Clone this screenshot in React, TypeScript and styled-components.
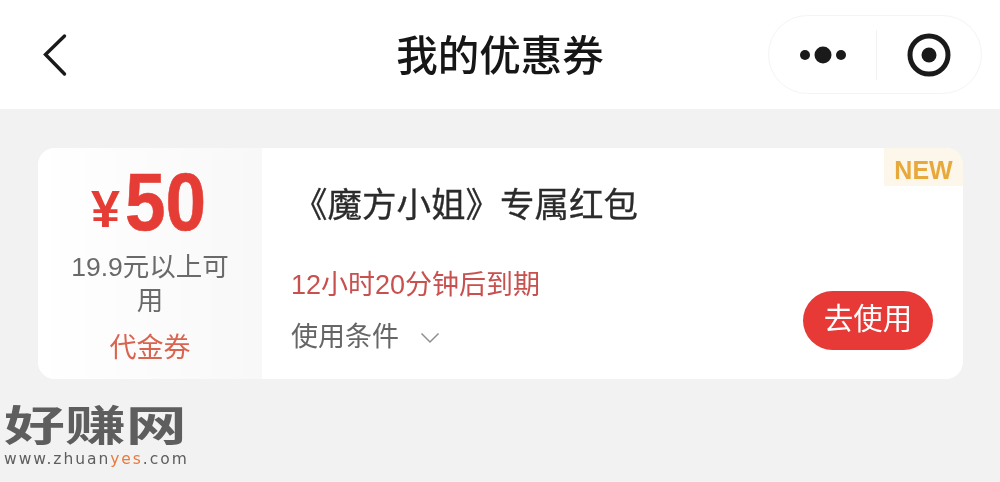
import React from "react";
import styled, { createGlobalStyle } from "styled-components";

const Global = createGlobalStyle`
  html, body { margin: 0; padding: 0; background: #f2f2f2; }
  body { font-family: "Liberation Sans", "Noto Sans CJK SC", sans-serif; }
`;

const Page = styled.div`
  width: 1000px;
  height: 482px;
  overflow: hidden;
  background: #f2f2f2;
  display: flex;
  flex-direction: column;
  filter: blur(0.35px);
`;

const Header = styled.header`
  height: 109px;
  flex: none;
  background: #fff;
  display: grid;
  grid-template-columns: 1fr auto 1fr;
  align-items: center;
  padding: 0 18px;
`;

const BackButton = styled.div`
  display: flex;
  align-items: center;
  height: 46px;
  padding-left: 24px;
`;

const Title = styled.h1`
  margin: 0 0 4px;
  font-size: 41.5px;
  line-height: 54px;
  font-weight: 500;
  font-family: "Noto Sans CJK SC", sans-serif;
  color: #161616;
`;

const Capsule = styled.div`
  justify-self: end;
  width: 214px;
  height: 79px;
  box-sizing: border-box;
  border: 1.5px solid #f4f4f4;
  border-radius: 40px;
  display: grid;
  grid-template-columns: 107px 1px 1fr;
  align-items: center;
  justify-items: center;
`;

const Divider = styled.div`
  width: 1px;
  height: 50px;
  background: #f2f2f2;
`;

const Card = styled.section`
  margin: 39px 37px 0 38px;
  height: 231px;
  flex: none;
  border-radius: 17px;
  background: #fff;
  display: flex;
  overflow: hidden;
  position: relative;
`;

const Amount = styled.div`
  width: 224px;
  flex: none;
  box-sizing: border-box;
  padding: 16px 22px 0;
  background: linear-gradient(90deg, #ffffff 0%, #f8f8f8 100%);
  display: flex;
  flex-direction: column;
  align-items: center;
  text-align: center;
`;

const Price = styled.div`
  display: flex;
  align-items: baseline;
  height: 76px;
  color: #e53d35;
  font-weight: 700;
  line-height: 76px;
  margin-left: -2px;
`;

const Yen = styled.span`
  font-size: 52px;
  display: inline-block;
  margin-right: 5px;
  transform: translateY(-3px);
`;

const Digits = styled.span`
  font-size: 81px;
  display: inline-block;
  width: 82px;
  transform: scaleX(0.9);
  transform-origin: left center;
  -webkit-text-stroke: 0.6px #e53d35;
`;

const Condition = styled.div`
  margin-top: 10px;
  font-size: 26.5px;
  line-height: 34px;
  color: #6a6a6a;
  width: 170px;
`;

const Kind = styled.div`
  margin-top: 9px;
  font-size: 27px;
  line-height: 38px;
  color: #d9644f;
  font-family: "Noto Sans CJK SC", sans-serif;
`;

const Info = styled.div`
  flex: 1;
  display: flex;
  flex-direction: column;
  padding: 29px 30px 0 31px;
`;

const CouponName = styled.div`
  font-size: 34.5px;
  line-height: 50px;
  color: #2b2b2b;
  font-family: "Noto Sans CJK SC", sans-serif;
  -webkit-text-stroke: 0.3px #2b2b2b;
`;

const Bottom = styled.div`
  margin-top: 40px;
  margin-left: -2px;
  display: flex;
  justify-content: space-between;
  align-items: flex-end;
`;

const Meta = styled.div`
  display: flex;
  flex-direction: column;
  gap: 15px;
`;

const Expiry = styled.div`
  font-size: 27px;
  line-height: 37px;
  color: #c8504f;
`;

const Terms = styled.div`
  display: flex;
  align-items: center;
  gap: 21px;
  font-size: 27px;
  line-height: 37px;
  color: #666;
`;

const UseButton = styled.div`
  width: 130px;
  height: 59px;
  border-radius: 30px;
  background: #e73a36;
  color: #fff;
  font-size: 29.5px;
  line-height: 56px;
  text-align: center;
  margin-bottom: 6px;
`;

const NewBadge = styled.div`
  position: absolute;
  top: 0;
  right: 0;
  width: 79px;
  height: 38px;
  background: #fdf6ea;
  color: #e8a93c;
  font-weight: 700;
  font-size: 25px;
  line-height: 44px;
  text-align: center;
`;

const Watermark = styled.div`
  margin: 24px 0 0 4px;
  width: 190px;
  display: flex;
  flex-direction: column;
  gap: 0;
`;

const MarkTitle = styled.div`
  height: 48px;
  font-weight: 700;
  font-size: 42px;
  line-height: 48px;
  color: #5e5e5e;
  white-space: nowrap;
  transform: scaleX(1.45);
  transform-origin: left center;
`;

const MarkUrl = styled.div`
  font-family: "DejaVu Sans", sans-serif;
  font-size: 15.5px;
  line-height: 16px;
  letter-spacing: 1.95px;
  color: #5e5e5e;
  white-space: nowrap;
`;

const MarkAccent = styled.span`
  color: #e87a3e;
`;

export default function App() {
  return (
    <Page>
      <Global />
      <Header>
        <BackButton>
          <svg width="26" height="44" viewBox="0 0 26 44" fill="none">
            <path d="M22.5 3 L3.5 21.5 L22.5 41" stroke="#1a1a1a" strokeWidth="3.4" strokeLinecap="round" strokeLinejoin="miter" />
          </svg>
        </BackButton>
        <Title>我的优惠券</Title>
        <Capsule>
          <svg width="48" height="18" viewBox="0 0 48 18">
            <circle cx="6" cy="9" r="5" fill="#1a1a1a" />
            <circle cx="24" cy="9" r="8.5" fill="#1a1a1a" />
            <circle cx="42" cy="9" r="5" fill="#1a1a1a" />
          </svg>
          <Divider />
          <svg width="44" height="44" viewBox="0 0 44 44">
            <circle cx="22" cy="22" r="19" fill="none" stroke="#1a1a1a" strokeWidth="5" />
            <circle cx="22" cy="22" r="7.5" fill="#1a1a1a" />
          </svg>
        </Capsule>
      </Header>
      <Card>
        <Amount>
          <Price>
            <Yen>¥</Yen>
            <Digits>50</Digits>
          </Price>
          <Condition>19.9元以上可用</Condition>
          <Kind>代金券</Kind>
        </Amount>
        <Info>
          <CouponName>《魔方小姐》专属红包</CouponName>
          <Bottom>
            <Meta>
              <Expiry>12小时20分钟后到期</Expiry>
              <Terms>
                使用条件
                <svg width="20" height="14" viewBox="0 0 20 14" fill="none">
                  <path d="M1.5 2.5 L10 11 L18.5 2.5" stroke="#8f8f8f" strokeWidth="1.5" />
                </svg>
              </Terms>
            </Meta>
            <UseButton>去使用</UseButton>
          </Bottom>
        </Info>
        <NewBadge>NEW</NewBadge>
      </Card>
      <Watermark>
        <MarkTitle>好赚网</MarkTitle>
        <MarkUrl>
          www.zhuan<MarkAccent>yes</MarkAccent>.com
        </MarkUrl>
      </Watermark>
    </Page>
  );
}
